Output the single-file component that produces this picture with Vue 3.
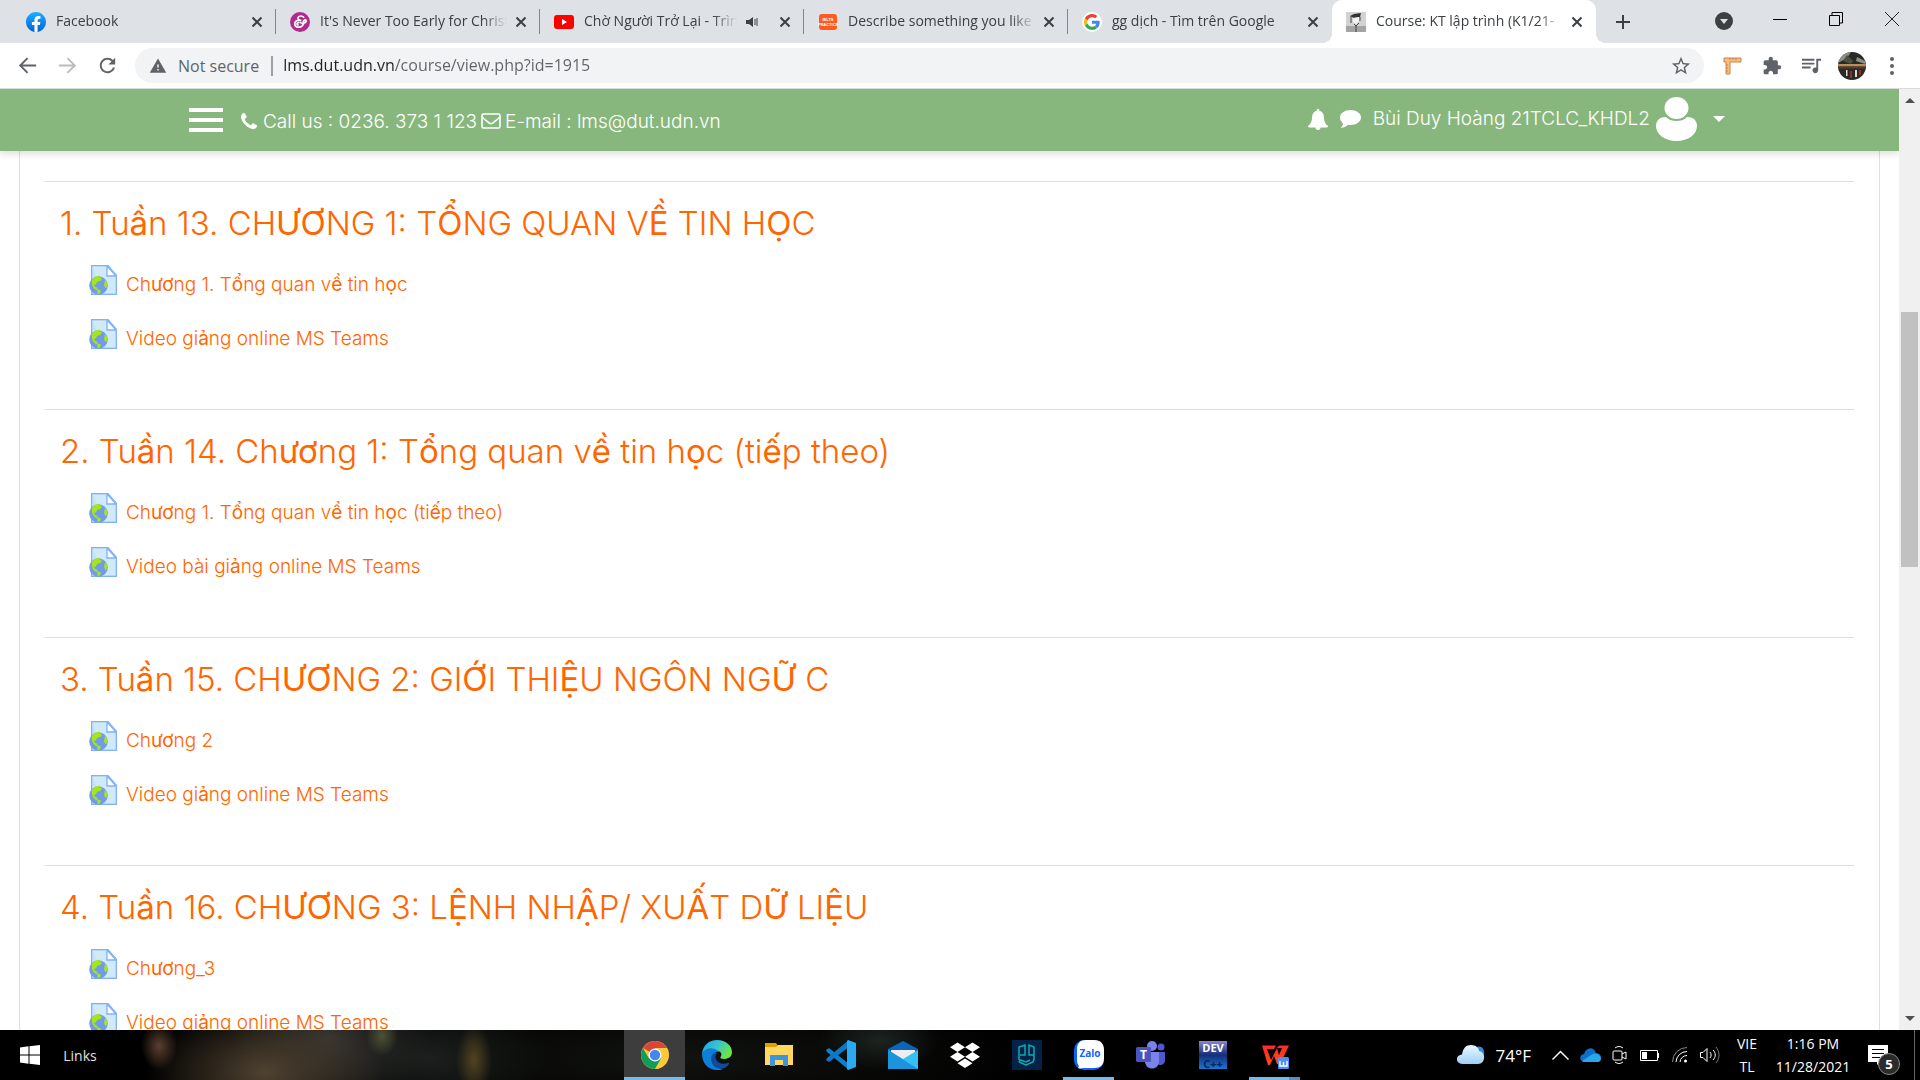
<script setup>
import { ref } from 'vue'

const tabs = [
  { id: 'facebook', title: 'Facebook' },
  { id: 'amp', title: "It's Never Too Early for Christ" },
  { id: 'youtube', title: 'Chờ Người Trở Lại - Trình', audio: true },
  { id: 'ielts', title: 'Describe something you like' },
  { id: 'google', title: 'gg dịch - Tìm trên Google' },
  { id: 'course', title: 'Course: KT lập trình (K1/21-', active: true }
]

const address = ref('lms.dut.udn.vn/course/view.php?id=1915')

const sections = [
  { title: '1. Tuần 13. CHƯƠNG 1: TỔNG QUAN VỀ TIN HỌC', items: ['Chương 1. Tổng quan về tin học', 'Video giảng online MS Teams'] },
  { title: '2. Tuần 14. Chương 1: Tổng quan về tin học (tiếp theo)', items: ['Chương 1. Tổng quan về tin học (tiếp theo)', 'Video bài giảng online MS Teams'] },
  { title: '3. Tuần 15. CHƯƠNG 2: GIỚI THIỆU NGÔN NGỮ C', items: ['Chương 2', 'Video giảng online MS Teams'] },
  { title: '4. Tuần 16. CHƯƠNG 3: LỆNH NHẬP/ XUẤT DỮ LIỆU', items: ['Chương_3', 'Video giảng online MS Teams'] }
]

// Letters of the extended Vietnamese block are set in a heavier weight.
const runs = (text) =>
  text.split(/([ơưƠƯ\u1EA0-\u1EF9]+)/).filter(Boolean).map((t) => ({ t, heavy: /^[ơưƠƯ\u1EA0-\u1EF9]/.test(t) }))

const apps = ['chrome', 'edge', 'files', 'code', 'mail', 'dropbox', 'pg', 'zalo', 'teams', 'dev', 'wps']
</script>

<template>
  <div class="screen">
    <header class="tabstrip">
      <div v-for="tab in tabs" :key="tab.id" class="tab" :class="{ active: tab.active }">
        <svg v-if="tab.id === 'facebook'" class="fav" viewBox="0 0 24 24"><defs><linearGradient id="fb" x1="0" y1="0" x2="0" y2="1"><stop offset="0" stop-color="#19afff" /><stop offset="1" stop-color="#0062e0" /></linearGradient></defs><circle cx="12" cy="12" r="11.5" fill="#fff" /><path fill="url(#fb)" d="M24 12.07c0-6.63-5.37-12-12-12s-12 5.37-12 12c0 5.99 4.39 10.95 10.13 11.85v-8.38H7.08v-3.47h3.05V9.43c0-3.01 1.79-4.67 4.53-4.67 1.31 0 2.69.24 2.69.24v2.95h-1.52c-1.49 0-1.96.93-1.96 1.87v2.25h3.33l-.53 3.47h-2.8v8.38C19.61 23.02 24 18.06 24 12.07z" /></svg>
        <svg v-else-if="tab.id === 'amp'" class="fav" viewBox="0 0 20 20"><circle cx="10" cy="10" r="10" fill="#b12a8c" /><path d="M13.6 5.2c-1.2-1.6-5-1.8-5.6.5-.4 1.8 1.2 2.6 2.6 2.6M10.6 8.3c-3.6-.4-6.200 1-5.800 4 .5 3.400 5.400 3.700 7.600 1.300 1.400-1.600 1.600-3.400 1-4.700M10.300 10.400c1.600 1.500 5.800.8 5.900-1.300.1-1.300-1.500-1.700-2-.6M8.500 10.600c-1.700.1-1.900 2.200-.5 2.300" fill="none" stroke="#fff" stroke-width="1.700" stroke-linecap="round" /></svg>
        <svg v-else-if="tab.id === 'youtube'" class="fav" viewBox="0 0 20 20"><rect y="3" width="20" height="14" rx="3" fill="#f00" /><path d="M8 7l5 3-5 3z" fill="#fff" /></svg>
        <svg v-else-if="tab.id === 'ielts'" class="fav" viewBox="0 0 20 20"><rect x="1" y="2" width="18" height="16" rx="3" fill="#ff5a1f" /><text x="10" y="9" class="tiny">IELTS</text><text x="10" y="14" class="tiny">PRACTICE</text></svg>
        <svg v-else-if="tab.id === 'google'" class="fav" viewBox="-6 -6 60 60"><circle cx="24" cy="24" r="30" fill="#fff" /><path fill="#ea4335" d="M24 9.500c3.540 0 6.710 1.220 9.210 3.600l6.850-6.850C35.900 2.380 30.470 0 24 0 14.620 0 6.510 5.380 2.560 13.220l7.980 6.190C12.430 13.720 17.740 9.500 24 9.500z" /><path fill="#4285f4" d="M46.980 24.550c0-1.570-.15-3.090-.38-4.550H24v9.020h12.940c-.58 2.960-2.260 5.480-4.780 7.180l7.730 6c4.510-4.180 7.090-10.360 7.090-17.650z" /><path fill="#fbbc05" d="M10.530 28.590c-.48-1.450-.76-2.990-.76-4.590s.27-3.140.76-4.590l-7.980-6.190C.92 16.460 0 20.120 0 24c0 3.880.92 7.540 2.560 10.780l7.970-6.190z" /><path fill="#34a853" d="M24 48c6.480 0 11.930-2.130 15.890-5.810l-7.730-6c-2.150 1.450-4.920 2.300-8.160 2.300-6.260 0-11.570-4.220-13.470-9.910l-7.980 6.190C6.510 42.620 14.620 48 24 48z" /></svg>
        <svg v-else class="fav" viewBox="0 0 20 20"><rect width="20" height="20" fill="#d2d2d2" /><path d="M0 14h20v6H0z" fill="#a4a4a4" /><path d="M4 4l4-2 7-1-1 4-6 1z" fill="#333" /><path d="M7 6l6-1v4l-3 3-3-2z" fill="#f4f4f4" /><path d="M5 4v7M8 12l2 2 3-3M10 14v6M14 5v4" stroke="#444" fill="none" /></svg>
        <span class="tab-title">{{ tab.title }}</span>
        <svg v-if="tab.audio" class="audio" viewBox="0 0 14 14"><path d="M1 5h3l4-3v10L4 9H1z" fill="#3c4043" /><path d="M10 4v6M12 3v8" stroke="#3c4043" /></svg>
        <button class="tab-close" aria-label="Close tab"><svg viewBox="0 0 12 12"><path d="M1.500 1.500l9 9M10.500 1.500l-9 9" stroke="#3c4043" stroke-width="2" /></svg></button>
      </div>
      <button class="new-tab" aria-label="New tab"><svg viewBox="0 0 16 16"><path d="M8 1v14M1 8h14" stroke="#3c4043" stroke-width="2" /></svg></button>
      <div class="window-buttons">
        <button class="search-tabs" aria-label="Search tabs"><svg width="18" height="18" viewBox="0 0 18 18"><circle cx="9" cy="9" r="9" fill="#3c4043" /><path d="M5 7h8l-4 5z" fill="#dee1e6" /></svg></button>
        <button aria-label="Minimize"><svg width="14" height="14" viewBox="0 0 14 14"><path d="M0 7.500h14" stroke="#000" /></svg></button>
        <button aria-label="Restore"><svg width="14" height="14" viewBox="0 0 14 14"><path d="M.5 3.500h10v10H.5zM3 3V.5h10.500V11H11" fill="none" stroke="#000" /></svg></button>
        <button aria-label="Close"><svg width="14" height="14" viewBox="0 0 14 14"><path d="M0 0l14 14M14 0L0 14" stroke="#222" /></svg></button>
      </div>
    </header>

    <div class="toolbar">
      <button class="nav" aria-label="Back"><svg viewBox="0 0 24 24"><path fill="#5f6368" d="M21 11H6.800l6-6L11.400 3.600 3 12l8.400 8.400 1.400-1.400-6-6H21z" /></svg></button>
      <button class="nav" aria-label="Forward"><svg viewBox="0 0 24 24"><path fill="#b9bbbe" d="M3 11h14.200l-6-6 1.400-1.400L21 12l-8.400 8.400-1.400-1.400 6-6H3z" /></svg></button>
      <button class="nav" aria-label="Reload"><svg viewBox="0 0 24 24"><path fill="#5f6368" d="M17.650 6.350C16.200 4.900 14.210 4 12 4c-4.420 0-7.990 3.580-7.990 8s3.570 8 7.990 8c3.730 0 6.840-2.550 7.730-6h-2.080c-.82 2.330-3.040 4-5.650 4-3.310 0-6-2.690-6-6s2.690-6 6-6c1.660 0 3.140.69 4.220 1.780L13 11h7V4z" /></svg></button>
      <div class="omnibox">
        <svg class="warn" viewBox="0 0 24 24"><path fill="#5f6368" d="M1 21h22L12 2zm12-3h-2v-2h2zm0-4h-2v-4h2z" /></svg>
        <label class="security" for="address">Not secure</label>
        <input id="address" v-model="address" class="address" type="text" />
        <button class="star" aria-label="Bookmark this page"><svg viewBox="0 0 24 24"><path fill="#5f6368" d="M22 9.240l-7.190-.62L12 2 9.190 8.630 2 9.240l5.460 4.730L5.820 21 12 17.270 18.180 21l-1.630-7.030zM12 15.400l-3.760 2.270 1-4.280-3.320-2.880 4.380-.38L12 6.100l1.710 4.040 4.380.38-3.320 2.880 1 4.280z" /></svg></button>
      </div>
      <div class="extensions">
        <button aria-label="Page ruler"><svg viewBox="0 0 20 20"><path d="M2 2h17v4H8v12H4V6H2z" fill="#f5bd80" /><path d="M2 6V2h17v4H8v12H4V6H2M8 2v2M11 2v2M14 2v2M4 9h2M4 12h2M4 15h2" stroke="#cd8440" fill="none" /></svg></button>
        <button aria-label="Extensions"><svg viewBox="0 0 24 24"><path fill="#5f6368" d="M20.500 11H19V7c0-1.100-.9-2-2-2h-4V3.500C13 2.120 11.880 1 10.500 1S8 2.120 8 3.500V5H4c-1.100 0-1.990.9-1.990 2v3.800H3.500c1.490 0 2.700 1.210 2.700 2.700s-1.210 2.700-2.700 2.700H2V20c0 1.100.9 2 2 2h3.800v-1.500c0-1.490 1.210-2.700 2.700-2.700s2.700 1.210 2.700 2.700V22H17c1.100 0 2-.9 2-2v-4h1.500c1.380 0 2.500-1.120 2.500-2.500S21.880 11 20.500 11z" /></svg></button>
        <button aria-label="Media controls"><svg viewBox="2 3 21 19"><path fill="#5f6368" d="M15 5H2v2h13zm0 4H2v2h13zM2 15h9v-2H2zM17 5v9.180c-.31-.11-.65-.18-1-.18-1.660 0-3 1.340-3 3s1.340 3 3 3 3-1.340 3-3V7h3V5z" /></svg></button>
        <button aria-label="Profile"><svg class="profile" viewBox="0 0 28 28"><defs><clipPath id="pc"><circle cx="14" cy="14" r="14" /></clipPath></defs><g clip-path="url(#pc)"><path d="M0 0h28v28H0z" fill="#2b2926" /><path d="M4 0h9l-4 6-9 5zM19 5l8 4v3l-9-3z" fill="#8d8f85" /><path d="M9 3l6 6-2 3-8-3z" fill="#4b5145" /><path d="M0 12h28v2.500H0z" fill="#b58e62" /><path d="M0 14.500h28v2H0z" fill="#5b3a27" /><path d="M8 18h1.500v6H8zM17 18h2v7h-2z" fill="#ded6cc" /><path d="M12 19h2v7h-2zM21 18h2v5h-2z" fill="#8f2f26" /></g></svg></button>
        <button aria-label="Menu"><svg viewBox="0 0 20 20"><circle cx="10" cy="3" r="2" fill="#5f6368" /><circle cx="10" cy="10" r="2" fill="#5f6368" /><circle cx="10" cy="17" r="2" fill="#5f6368" /></svg></button>
      </div>
    </div>

    <div class="viewport">
      <div class="page">
        <nav class="site-bar">
          <button class="burger" aria-label="Side panel"><i></i><i></i><i></i></button>
          <p class="contact">
            <svg class="phone" viewBox="0 128 1408 1408"><path fill="#fff" d="M1408 1240q0 27-10 70.500t-21 68.500q-21 50-122 106-94 51-186 51-27 0-53-3.500t-57.500-12.500-47-14.500-55.500-20.500-49-18q-98-35-175-83-127-79-264-216t-216-264q-48-77-83-175-3-9-18-49t-20.500-55.500-14.500-47-12.500-57.500-3.500-53q0-92 51-186 56-101 106-122 25-11 68.500-21t70.500-10q14 0 21 3 18 6 53 76 11 19 30 54t35 63.500 31 53.500q3 4 17.500 25t21.500 35.500 7 28.500q0 20-28.500 50t-62 55-62 53-28.500 46q0 9 5 22.500t8.500 20.500 14 24 11.500 19q76 137 174 235t235 174q2 1 19 11.500t24 14 20.500 8.500 22.500 5q18 0 46-28.500t53-62 55-62 50-28.500q14 0 28.500 7t35.500 21.500 25 17.500q25 15 53.500 31t63.500 35 54 30q70 35 76 53 3 7 3 21z" /></svg>
            <span>Call us : 0236. 373 1 123</span>
            <svg class="envelope" viewBox="0 0 20 16"><rect x="1" y="1" width="18" height="14" rx="1.500" fill="none" stroke="#fff" stroke-width="1.600" /><path d="M1 4c3 3 5 4 7 6 1.500 1 2.500 1 4 0 2-2 4-3 7-6" fill="none" stroke="#fff" stroke-width="1.600" /></svg>
            <span>E-mail : lms@dut.udn.vn</span>
          </p>
          <div class="user">
            <button aria-label="Notifications"><svg width="20" height="21" viewBox="0 0 20 21"><path fill="#fff" d="M10 0c1 0 1.500.7 1.300 1.700 3 .7 4.500 3 4.600 6 .1 5 1.500 7.300 4.100 9.300 0 1-.5 1.400-1.200 1.400H12.500c0 1.500-1.100 2.600-2.500 2.600s-2.500-1.100-2.500-2.600H1.200C.5 18.400 0 18 0 17c2.600-2 4-4.300 4.100-9.300.1-3 1.600-5.300 4.600-6C8.500.7 9 0 10 0z" /></svg></button>
            <button aria-label="Messages"><svg width="21" height="18" viewBox="0 0 21 18"><path fill="#fff" d="M10.500 0C16.300 0 21 3.300 21 7.500S16.300 15 10.500 15c-.8 0-1.600-.1-2.300-.2C6 16.700 3.600 17.600 1.400 17.800c-.5 0-.6-.4-.3-.7 1.200-1 1.800-2.100 2-3.700C1.200 12 0 9.900 0 7.500 0 3.300 4.700 0 10.500 0z" /></svg></button>
            <button class="account"><span>Bùi Duy Hoàng 21TCLC_KHDL2</span><svg width="41" height="44" viewBox="0 0 41 44"><ellipse cx="20.500" cy="11" rx="12" ry="11" fill="#fff" /><path d="M10 20c3 3.300 6.500 4 10.500 4s7.500-.7 10.500-4c6 0 10 3.300 10 9 0 8.500-9 15-20.500 15S0 37.500 0 29c0-5.700 4-9 10-9z" fill="#fff" /></svg><i class="caret"></i></button>
          </div>
        </nav>
        <main class="card">
          <section v-for="section in sections" :key="section.title" class="topic">
            <h3><a href="#"><span v-for="(r, i) in runs(section.title)" :key="i" :class="{ heavy: r.heavy }">{{ r.t }}</span></a></h3>
            <ul>
              <li v-for="item in section.items" :key="item">
                <svg width="28" height="30" viewBox="0 0 28 30"><path d="M2.600.600h16.400l8.400 9.800v19H2.600z" fill="#c6e4f9" stroke="#82b1f5" stroke-width="1.300" /><path d="M4 2h13v9h9v17H14z" fill="#d0eafa" /><path d="M18 1v10h9z" fill="#fff" stroke="#82b1f5" stroke-width="1.300" /><circle cx="9.500" cy="20.500" r="9.300" fill="#719bea" /><path d="M3 15c2-3 5-4.500 8-4.200l-1 2 3-.3-1 3-4 1.500-1 2.500-2 .2 1 2 2.500 1-1 2.500c-3-1.500-5.500-5-4.500-10.200zM16 15l2 2.500v4l-1.500 2-1.500-3.500zM8 24l4 1.500-1 3-2.500.5z" fill="#a5e619" /></svg>
                <a href="#"><span v-for="(r, i) in runs(item)" :key="i" :class="{ heavy: r.heavy }">{{ r.t }}</span></a>
              </li>
            </ul>
          </section>
        </main>
      </div>
      <div class="scrollbar">
        <i class="arrow up"></i>
        <div class="track"><div class="before"></div><div class="thumb"></div><div class="after"></div></div>
        <i class="arrow down"></i>
      </div>
    </div>

    <footer class="taskbar">
      <button class="start" aria-label="Start"><svg width="20" height="20" viewBox="0 0 20 20"><path fill="#fff" d="M0 2.500L8.500 1.300v8.200H0zM9.500 1.200L20 0v9.500H9.500zM0 10.500h8.500v8.200L0 17.500zM9.500 10.500H20V20L9.500 18.800z" /></svg></button>
      <button class="links">Links</button>
      <div class="apps">
        <button v-for="app in apps" :key="app" class="app" :class="app" :aria-label="app">
          <svg v-if="app === 'chrome'" viewBox="0 0 30 30"><circle cx="15" cy="15" r="14" fill="#fbc93d" /><path d="M2.900 8A14 14 0 0 1 27.100 8H15v7z" fill="#db4437" /><path d="M2.900 8A14 14 0 0 0 15 29l6-10.500-12 0z" fill="#0f9d58" /><path d="M27.200 9H15l6.300 10L15.200 29A14 14 0 0 0 27.200 9z" fill="#fbc93d" /><circle cx="15" cy="15" r="6.500" fill="#fff" /><circle cx="15" cy="15" r="5.200" fill="#4285f4" /></svg>
          <svg v-else-if="app === 'edge'" viewBox="0 0 30 30"><defs><linearGradient id="eg" x1="0" y1="0" x2="1" y2=".4"><stop offset="0" stop-color="#1d9fe8" /><stop offset=".5" stop-color="#35c1d8" /><stop offset="1" stop-color="#6be647" /></linearGradient></defs><path d="M0 14C1 5 7 0 15 0c9 0 15 6 15 12 0 5-4 7-8 7-3 0-4-1-3.500-2 2-3 .5-6-3.500-6C9 8 3 9 0 14z" fill="url(#eg)" /><path d="M0 14c2-5 8-7 13-5 2 .8 4 2 4 3-4-1-7 3-6 8 1 5 5 9 10 9-2 1-4 1-6 1C6 30 0 23 0 14z" fill="#0f7ed8" /><path d="M11 14c-3 3-2 9 1 12 4 4 11 4 15-2 .5-1 0-1.500-1-1-6 2-12 0-12.500-6 0-2 .5-3 1.500-4-1.500-.5-3 0-4 1z" fill="#0d4c9c" /></svg>
          <svg v-else-if="app === 'files'" viewBox="0 0 30 30"><path d="M1 3h11l2 3v5H1z" fill="#e09f00" /><path d="M1 7h11l2-2h15v20H1z" fill="#ffd762" /><path d="M6 26V15h18v11h-5v-6h-8v6z" fill="#3f94dc" /></svg>
          <svg v-else-if="app === 'code'" viewBox="0 0 30 30"><path d="M0 10l3-2 20 16v6L1 12z" fill="#0e7fca" /><path d="M0 20l3 2L23 7V0L1 18z" fill="#0a78c4" /><path d="M22 0l8 3v24l-8 3-1-1V1z" fill="#2aaaf2" /></svg>
          <svg v-else-if="app === 'mail'" viewBox="0 0 30 30"><path d="M0 9L15 1l15 8v8H0z" fill="#0a66b8" /><path d="M3 10h24v10H3z" fill="#eee" /><path d="M0 10l15 9 15-9v19H0z" fill="#35bff2" /><path d="M0 10l30 19H0z" fill="#1b94dc" /></svg>
          <svg v-else-if="app === 'dropbox'" viewBox="0 -1 24 24"><path fill="#fff" d="M6 1L0 4.800l6 3.800 6-3.800zM18 1l-6 3.800 6 3.800 6-3.800zM0 12.400l6 3.800 6-3.800-6-3.800zM18 8.600l-6 3.800 6 3.800 6-3.800zM6 17.500l6 3.800 6-3.800-6-3.800z" /></svg>
          <svg v-else-if="app === 'pg'" viewBox="0 0 30 30"><path d="M0 0h30v30H0z" fill="#022347" /><path d="M7 20V7l6-2v10H8M22 15h-5V5l5 2v12l-1 3-7 3-7-3M7 22l1-2 6 2 4-2" fill="none" stroke="#13a8b0" stroke-width="1.500" /></svg>
          <svg v-else-if="app === 'zalo'" viewBox="0 0 30 30"><rect width="30" height="30" rx="10" fill="#0a66ff" /><path d="M12 0h8c7 0 10 4 10 10v8c0 7-4 10-10 10h-9c-3 0-5 1-7 0 2-2 0-3-1-6V10C3 3 6 0 12 0z" fill="#fff" /><text x="16" y="17" class="zalo-text">Zalo</text></svg>
          <svg v-else-if="app === 'teams'" viewBox="0 0 30 30"><circle cx="16" cy="6" r="5" fill="#7b83eb" /><circle cx="25" cy="7" r="3.500" fill="#5059c9" /><path d="M20 12h9v8c0 5-5 6-8 4z" fill="#5059c9" /><path d="M9 12h14v9c0 10-14 10-14 0z" fill="#7b83eb" /><rect y="7" width="15" height="15" rx="1.500" fill="#4b53bc" /><text x="7.500" y="19" class="teams-text">T</text></svg>
          <svg v-else-if="app === 'dev'" viewBox="0 0 30 30"><defs><linearGradient id="dv" x1="0" y1="0" x2="0" y2="1"><stop offset="0" stop-color="#8b87cb" /><stop offset=".5" stop-color="#152e79" /><stop offset="1" stop-color="#1977d6" /></linearGradient></defs><path d="M1 1h28v28H1z" fill="url(#dv)" /><text x="15" y="12" class="dev-text">DEV</text><text x="15" y="28" class="dev-text cpp">C++</text></svg>
          <svg v-else viewBox="0 0 30 30"><defs><linearGradient id="wp" x1="0" y1="0" x2="0" y2="1"><stop offset="0" stop-color="#ff2a2a" /><stop offset="1" stop-color="#ff4a16" /></linearGradient></defs><path d="M2 5.500h14l-2 3.500H7l4 11 6-12c1-2 2-2.500 4-2.500h8L20 24h-3l-3-8-4 9H8z" fill="url(#wp)" /><path d="M17 8l5 0-3 7z" fill="#000" /><rect x="18" y="17" width="11" height="12" rx="1.500" fill="#4d8ff5" /><path d="M20 21v5h7v-5M23.500 22v4" fill="none" stroke="#fff" stroke-width="1.400" /></svg>
        </button>
      </div>
      <div class="tray">
        <button class="weather"><svg width="28" height="20" viewBox="0 0 28 20"><defs><linearGradient id="cl" x1="0" y1="0" x2="0" y2="1"><stop offset="0" stop-color="#edf8ff" /><stop offset="1" stop-color="#9dd0f5" /></linearGradient></defs><path d="M20 2c5-2 8 3 7 8l-3 5z" fill="#3d86d8" /><path d="M6 19c-8 0-8-9-1-9.500C6 3 9 0 14 0c5 0 8 3 8 6 7 1 7 13-1 13z" fill="url(#cl)" /></svg><span>74°F</span></button>
        <button class="tray-icon" aria-label="Show hidden icons"><svg width="17" height="10" viewBox="0 0 17 10"><path d="M.5 9.500l8-8 8 8" fill="none" stroke="#fff" stroke-width="1.500" /></svg></button>
        <button class="tray-icon" aria-label="OneDrive"><svg width="21" height="14" viewBox="0 0 21 14"><path d="M4 14c-5-1-5-7 0-8C6-1 14-2 16 5c5 0 6 5 4 8z" fill="#0f6fcb" /><path d="M4 14l-2-1 9-6c5-3 9 0 10 3 0 2-1 4-3 4z" fill="#28a8ea" /></svg></button>
        <button class="tray-icon" aria-label="Meet now"><svg width="16" height="18" viewBox="0 0 16 18"><rect x="1" y="5" width="9" height="9" rx="1" fill="none" stroke="#fff" /><path d="M10 8l4-2v7l-4-2M3 2c3-2 5-2 8 0M3 16c3 2 5 2 8 0" fill="none" stroke="#fff" /></svg></button>
        <button class="tray-icon" aria-label="Battery"><svg width="20" height="11" viewBox="0 0 20 11"><path d="M.5.500h17v10H.500zM18.500 3v5" fill="none" stroke="#fff" /><path d="M2 2h5v7H2z" fill="#fff" /></svg></button>
        <button class="tray-icon" aria-label="Network"><svg width="16" height="16" viewBox="0 0 16 16"><path d="M.500 15A14.500 14.500 0 0 1 15 .500" fill="none" stroke="#888" /><path d="M4 15A11 11 0 0 1 15 4.500M8 15a7 7 0 0 1 7-6.500" fill="none" stroke="#fff" /><circle cx="13.500" cy="14" r="1.500" fill="#fff" /></svg></button>
        <button class="tray-icon" aria-label="Volume"><svg width="20" height="18" viewBox="0 0 20 18"><path d="M.500 6.500h2.500l4-4v13l-4-4H.500zM10 6c1.500 2 1.500 4 0 6M13 4c3 3 3 7 0 10" fill="none" stroke="#fff" /><path d="M16 1c4 5 4 11 0 16" fill="none" stroke="#777" /></svg></button>
        <button class="lang"><span>VIE</span><span>TL</span></button>
        <button class="clock"><span>1:16 PM</span><span>11/28/2021</span></button>
        <button class="notes" aria-label="Notifications"><svg width="20" height="20" viewBox="0 0 20 20"><path d="M0 0h20v17h-8l-3 3v-3H0z" fill="#fff" /><path d="M4 4.500h12M4 8.500h12M4 12.500h8" stroke="#000" /></svg><b>5</b></button>
        <i class="peek"></i>
      </div>
    </footer>
  </div>
</template>

<style>
body { margin: 0; overflow: hidden; }
</style>

<style scoped>
.screen { display: flex; flex-direction: column; height: 100vh; overflow: hidden; font-family: "Open Sans", "Noto Sans", sans-serif; background: #fff; }
button { display: flex; align-items: center; justify-content: center; padding: 0; border: 0; background: none; font: inherit; color: inherit; flex: none; }
svg { display: block; flex: none; }

.tabstrip { display: flex; flex: none; height: 43px; padding-left: 12px; background: #dee1e6; color: #3c4043; font-size: 14px; }
.tab { position: relative; display: flex; align-items: center; flex: 0 1 264px; min-width: 0; padding: 0 13px 0 14px; box-sizing: border-box; }
.tab:not(.active)::after { content: ""; position: absolute; right: 0; top: 9px; height: 25px; width: 1px; background: #80868b; }
.tab:nth-child(5)::after { display: none; }
.tab.active { background: #fff; border-radius: 10px 10px 0 0; }
.tab.active::before, .tab.active::after { content: ""; position: absolute; bottom: 0; width: 10px; height: 10px; }
.tab.active::before { left: -10px; background: radial-gradient(circle at 0 0, transparent 10px, #fff 10px); }
.tab.active::after { right: -10px; background: radial-gradient(circle at 100% 0, transparent 10px, #fff 10px); }
.fav { width: 20px; height: 20px; margin-right: 10px; }
.tiny { font: 700 4px "Liberation Sans", sans-serif; fill: #fff; text-anchor: middle; }
.tab-title { flex: 1; min-width: 0; overflow: hidden; white-space: nowrap; line-height: 24px; padding-bottom: 2px; mask-image: linear-gradient(90deg, #000 calc(100% - 24px), transparent); }
.audio { width: 14px; height: 14px; margin: 0 12px 0 8px; }
.tab-close { width: 12px; margin-left: 8px; }
.tab-close svg { width: 12px; height: 12px; }
.new-tab { width: 54px; }
.new-tab svg { width: 16px; height: 16px; }
.window-buttons { display: flex; margin-left: auto; height: 38px; }
.window-buttons button { width: 56px; }
.window-buttons .search-tabs { height: 42px; }

.toolbar { display: flex; align-items: center; flex: none; height: 45px; padding: 0 8px 0 7px; border-bottom: 1px solid #d9dade; background: #fff; }
.nav { width: 40px; }
.nav svg { width: 23px; height: 23px; }
.omnibox { display: flex; align-items: center; flex: 1; height: 35px; margin-left: 8px; padding: 0 12px 0 14px; border-radius: 18px; background: #f1f3f4; font-size: 16px; color: #5f6368; }
.warn { width: 18px; height: 18px; margin-right: 11px; }
.security { padding-right: 12px; line-height: 20px; border-right: 2px solid #9aa0a6; }
.address { flex: 1; min-width: 0; height: 30px; margin-left: 10px; padding: 0 0 2px; border: 0; outline: 0; background: linear-gradient(90deg, #202124 112px, #5f6368 112px); background-clip: text; -webkit-text-fill-color: transparent; color: #5f6368; font: inherit; }
.star svg { width: 22px; height: 22px; }
.extensions { display: flex; margin-left: 8px; }
.extensions button { width: 40px; height: 32px; }
.extensions svg { width: 20px; height: 20px; }
.extensions svg.profile { width: 28px; height: 28px; }

.viewport { display: flex; flex: 1; min-height: 0; }
.page { flex: 1; min-width: 0; overflow: hidden; font-family: Inter, "Open Sans", sans-serif; font-weight: 300; }
.site-bar { position: relative; z-index: 1; display: flex; height: 62px; box-sizing: border-box; padding: 0 174px 0 189px; background: #88b77d; color: #fff; font-size: 19px; box-shadow: 0 2px 8px rgba(0, 0, 0, .16); }
.burger { flex-direction: column; gap: 6px; width: 34px; }
.burger i { width: 34px; height: 4px; background: #fff; }
.contact { display: flex; align-items: center; margin: 2px 0 0 18px; white-space: nowrap; }
.phone { width: 16px; height: 16px; margin-right: 6px; }
.envelope { width: 20px; height: 16px; margin: 0 4px; }
.user { display: flex; align-items: center; gap: 12px; margin-left: auto; height: 60px; white-space: nowrap; }
.account { gap: 6px; }
.account span { padding-bottom: 2px; }
.caret { margin-left: 10px; border: 6px solid transparent; border-top-color: #fff; border-bottom: 0; }

.card { margin: 0 19px; padding: 30px 25px 0; border: solid #dedfe0; border-width: 0 1px; }
.topic { height: 228px; box-sizing: border-box; padding: 21px 15px 0; border-top: 1px solid #dedfe0; }
h3 { margin: 0; font-size: 33px; line-height: 40px; font-weight: 300; white-space: nowrap; }
a { color: #ff6600; text-decoration: none; }
.heavy { font-weight: 400; }
ul { margin: 22px 0 0; padding: 0 0 0 29px; list-style: none; }
li { display: flex; gap: 9px; height: 54px; font-size: 19px; }
li a { line-height: 40px; white-space: nowrap; }

.scrollbar { display: flex; flex-direction: column; align-items: center; flex: none; width: 21px; background: #f0f0f0; }
.arrow { margin: 9px 0; border: 5px solid transparent; }
.arrow.up { border-bottom-color: #505050; border-top: 0; }
.arrow.down { border-top-color: #505050; border-bottom: 0; }
.track { display: flex; flex-direction: column; flex: 1; width: 17px; }
.before { flex: 200; }
.thumb { flex: 255; background: #c1c1c1; }
.after { flex: 440; }

.taskbar { display: flex; flex: none; height: 50px; color: #fff; background:
  radial-gradient(ellipse 18px 24px at 159px 16px, #5a4030, transparent),
  radial-gradient(ellipse 16px 20px at 382px 6px, #4d5235, transparent),
  radial-gradient(ellipse 18px 36px at 474px 30px, #51431f, transparent),
  radial-gradient(ellipse 120px 70px at 265px 42px, #4f4230, transparent),
  radial-gradient(ellipse 100px 70px at 330px 8px, #32312e, transparent),
  radial-gradient(ellipse 120px 60px at 430px 28px, #1b1f1d, transparent),
  radial-gradient(ellipse 60px 30px at 880px 10px, #1d2320, transparent),
  radial-gradient(ellipse 360px 70px at 680px 28px, #11130f, transparent), #000; }
.start { width: 60px; }
.links { width: 40px; font-size: 14px; color: #e0e0e0; }
.apps { display: flex; gap: 1px; margin-left: 524px; }
.app { position: relative; width: 61px; }
.app svg { width: 30px; height: 30px; }
.app.chrome { background: #3d3d3d; }
.app.chrome::after, .app.zalo::after, .app.wps::after { content: ""; position: absolute; left: 0; right: 0; bottom: 0; height: 3px; background: #76b9ed; }
.app.zalo::after { left: 5px; right: 5px; }
.app.wps::after { left: 5px; right: 5px; background: linear-gradient(90deg, #76b9ed 40px, #5b8fb8 40px); }
.zalo-text { font: 700 10px "Open Sans", sans-serif; fill: #0a66ff; text-anchor: middle; }
.teams-text { font: 700 12px "Open Sans", sans-serif; fill: #fff; text-anchor: middle; }
.dev-text { font: 700 11px "Open Sans", sans-serif; fill: #fff; text-anchor: middle; }
.cpp { fill: #03255a; }
.tray { display: flex; align-items: center; margin-left: auto; font-size: 14px; }
.tray button { height: 50px; }
.weather { gap: 11px; margin-right: 14px; font-size: 17px; }
.tray-icon { width: 30px; }
.lang, .clock { flex-direction: column; width: 44px; line-height: 23px; }
.clock { width: 88px; }
.tray .notes { position: relative; width: 46px; padding-right: 4px; }
.notes b { position: absolute; right: 3px; bottom: 5px; width: 20px; height: 20px; border: 1px solid #888; border-radius: 50%; background: #2b2b2b; font-size: 13px; line-height: 20px; text-align: center; }
.peek { width: 1px; height: 50px; margin: 0 5px 0 11px; background: #666; }
</style>
